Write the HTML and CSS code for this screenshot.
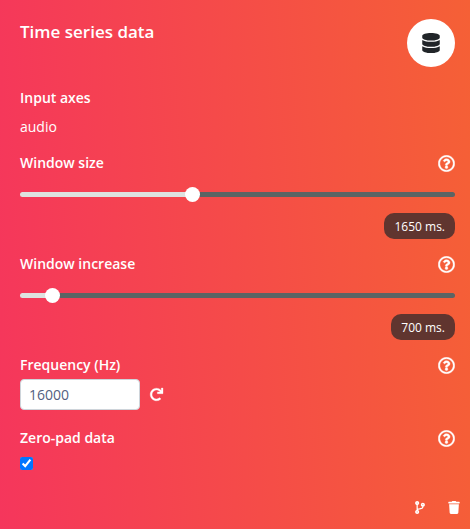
FILE: index.html
```html
<!DOCTYPE html>
<html lang="en">
<head>
<meta charset="utf-8">
<meta name="viewport" content="width=device-width, initial-scale=1">
<title>Time series data</title>
<link rel="stylesheet" href="styles.css">
</head>
<body>
<svg class="sprite" aria-hidden="true">
  <symbol id="help" viewBox="0 0 512 512"><path d="M256 8C119.043 8 8 119.083 8 256c0 136.997 111.043 248 248 248s248-111.003 248-248C504 119.083 392.957 8 256 8zm0 448c-110.532 0-200-89.431-200-200 0-110.495 89.472-200 200-200 110.491 0 200 89.471 200 200 0 110.53-89.431 200-200 200zm107.244-255.2c0 67.052-72.421 68.084-72.421 92.863V300c0 6.627-5.373 12-12 12h-45.647c-6.627 0-12-5.373-12-12v-8.659c0-35.745 27.1-50.034 47.579-61.516 17.561-9.845 28.324-16.541 28.324-29.579 0-17.246-21.999-28.693-39.784-28.693-23.189 0-33.894 10.977-48.942 29.969-4.057 5.12-11.46 6.071-16.666 2.124l-27.824-21.098c-5.107-3.872-6.251-11.066-2.644-16.363C184.846 131.491 214.94 112 261.794 112c49.071 0 101.45 38.304 101.45 88.8zM298 368c0 23.159-18.841 42-42 42s-42-18.841-42-42 18.841-42 42-42 42 18.841 42 42z"/></symbol>
</svg>
<main class="card">
  <header class="card-header">
    <h1 class="title">Time series data</h1>
    <span class="badge-icon">
      <svg class="icon-database" viewBox="0 0 448 512" aria-hidden="true"><path d="M448 73.143v45.714C448 159.143 347.667 192 224 192S0 159.143 0 118.857V73.143C0 32.857 100.333 0 224 0s224 32.857 224 73.143zM448 176v102.857C448 319.143 347.667 352 224 352S0 319.143 0 278.857V176c48.125 33.143 136.208 48.572 224 48.572S399.874 209.143 448 176zm0 160v102.857C448 479.143 347.667 512 224 512S0 479.143 0 438.857V336c48.125 33.143 136.208 48.572 224 48.572S399.874 369.143 448 336z"/></svg>
    </span>
  </header>

  <section class="axes">
    <h2 class="label">Input axes</h2>
    <p class="axis">audio</p>
  </section>

  <section class="slider-field">
    <div class="field-head">
      <label class="label" for="window-size">Window size</label>
      <button class="icon-button" type="button" aria-label="Help"><svg class="icon-help"><use href="#help"/></svg></button>
    </div>
    <input class="slider" id="window-size" type="range" min="0" max="1000" value="392" style="--fill: 39.2%">
    <output class="value" for="window-size">1650 ms.</output>
  </section>

  <section class="slider-field">
    <div class="field-head">
      <label class="label" for="window-increase">Window increase</label>
      <button class="icon-button" type="button" aria-label="Help"><svg class="icon-help"><use href="#help"/></svg></button>
    </div>
    <input class="slider" id="window-increase" type="range" min="0" max="1000" value="60" style="--fill: 6%">
    <output class="value" for="window-increase">700 ms.</output>
  </section>

  <section class="frequency">
    <div class="field-head">
      <label class="label" for="frequency">Frequency (Hz)</label>
      <button class="icon-button" type="button" aria-label="Help"><svg class="icon-help"><use href="#help"/></svg></button>
    </div>
    <div class="input-row">
      <input class="text-input" id="frequency" type="text" inputmode="numeric" value="16000">
      <button class="icon-button" type="button" aria-label="Reset frequency"><svg class="icon-redo" viewBox="0 0 512 512"><path d="M500.33 0h-47.41a12 12 0 0 0-12 12.57l4 82.76A247.42 247.42 0 0 0 256 8C119.34 8 7.9 119.53 8 256.19 8.1 393.07 119.1 504 256 504a247.1 247.1 0 0 0 166.18-63.91 12 12 0 0 0 .48-17.43l-34-34a12 12 0 0 0-16.38-.55A176 176 0 1 1 402.1 157.8l-101.53-4.87a12 12 0 0 0-12.57 12v47.41a12 12 0 0 0 12 12h200.33a12 12 0 0 0 12-12V12a12 12 0 0 0-12-12z"/></svg></button>
    </div>
  </section>

  <section class="zero-pad">
    <div class="field-head">
      <label class="label" for="zero-pad">Zero-pad data</label>
      <button class="icon-button" type="button" aria-label="Help"><svg class="icon-help"><use href="#help"/></svg></button>
    </div>
    <input class="checkbox" id="zero-pad" type="checkbox" checked>
  </section>

  <footer class="actions">
    <button class="icon-button" type="button" aria-label="Branch"><svg class="icon-branch" viewBox="0 0 384 512"><path d="M384 144c0-44.2-35.8-80-80-80s-80 35.8-80 80c0 36.4 24.3 67.1 57.5 76.8-.6 16.1-4.2 28.5-11 36.9-15.4 19.2-49.3 22.4-85.2 25.7-28.2 2.6-57.4 5.4-81.3 16.9v-144c32.5-10.2 56-40.5 56-76.3 0-44.2-35.8-80-80-80S0 35.8 0 80c0 35.8 23.5 66.1 56 76.3v199.3C23.5 365.9 0 396.2 0 432c0 44.2 35.8 80 80 80s80-35.8 80-80c0-34-21.2-63.1-51.2-74.6 3.1-5.2 7.8-9.8 14.9-13.4 16.2-8.2 40.4-10.4 66.1-12.8 42.2-3.9 90-8.4 118.2-43.4 14-17.4 21.1-39.8 21.6-67.9 31.6-10.8 54.4-40.7 54.4-75.9zM80 64c8.8 0 16 7.2 16 16s-7.2 16-16 16-16-7.2-16-16 7.2-16 16-16zm0 384c-8.8 0-16-7.2-16-16s7.2-16 16-16 16 7.2 16 16-7.2 16-16 16zm224-320c8.8 0 16 7.2 16 16s-7.2 16-16 16-16-7.2-16-16 7.2-16 16-16z"/></svg></button>
    <button class="icon-button" type="button" aria-label="Delete"><svg class="icon-trash" viewBox="0 0 448 512"><path d="M432 32H312l-9.4-18.7A24 24 0 0 0 281.1 0H166.8a23.72 23.72 0 0 0-21.4 13.3L136 32H16A16 16 0 0 0 0 48v32a16 16 0 0 0 16 16h416a16 16 0 0 0 16-16V48a16 16 0 0 0-16-16zM53.2 467a48 48 0 0 0 47.9 45h245.8a48 48 0 0 0 47.9-45L416 128H32z"/></svg></button>
  </footer>
</main>
</body>
</html>
```
FILE: styles.css
```css
* {
  box-sizing: border-box;
}

body {
  margin: 0;
  color: #fff;
  font-family: "Open Sans", sans-serif;
  font-size: 14px;
  line-height: 20px;
}

.sprite {
  display: none;
}

.card {
  display: flex;
  flex-direction: column;
  min-height: 100vh;
  padding: 19px 15px 15px 20px;
  background: linear-gradient(87deg, #f5365c, #f56036);
}

.card-header {
  display: flex;
  align-items: flex-start;
  justify-content: space-between;
  margin-bottom: 21px;
}

.title {
  margin: 0;
  font-size: 17px;
  font-weight: 600;
  line-height: 26px;
}

.badge-icon {
  display: flex;
  align-items: center;
  justify-content: center;
  width: 48px;
  height: 48px;
  border-radius: 50%;
  background: #fff;
}

.label {
  margin: 0;
  font-size: 14px;
  font-weight: 600;
  line-height: 20px;
}

.axis {
  margin: 9px 0 16px;
}

.field-head {
  display: flex;
  align-items: center;
  justify-content: space-between;
}

.icon-button {
  display: flex;
  padding: 0;
  border: 0;
  background: none;
  color: inherit;
  cursor: pointer;
}

svg {
  display: block;
  fill: currentColor;
}

.icon-help {
  width: 17px;
  height: 17px;
  stroke: currentColor;
  stroke-width: 12px;
}

.icon-database {
  width: 18px;
  height: 20px;
  color: #212529;
}

.icon-redo {
  width: 13px;
  height: 13px;
  overflow: visible;
  stroke: currentColor;
  stroke-width: 12px;
}

.icon-branch {
  width: 10px;
  height: 13px;
}

.icon-trash {
  width: 12px;
  height: 13px;
}

.slider-field {
  display: flex;
  flex-direction: column;
  margin-bottom: 15px;
}

.slider {
  --track: linear-gradient(90deg, #dee2e0 var(--fill), #5c6464 var(--fill));
  appearance: none;
  width: 100%;
  height: 15px;
  margin: 14px 0 11px;
  background: none;
}

.slider::-webkit-slider-runnable-track {
  height: 5px;
  border-radius: 3px;
  background: var(--track);
}

.slider::-webkit-slider-thumb {
  appearance: none;
  width: 15px;
  height: 15px;
  margin-top: -5px;
  border-radius: 50%;
  background: #fff;
}

.value {
  align-self: flex-end;
  padding: 4px 10px 2px;
  border-radius: 10px;
  background: #60352f;
  font-size: 12px;
  line-height: 20px;
}

.frequency {
  margin-bottom: 18px;
}

.input-row {
  display: flex;
  align-items: center;
  gap: 10px;
  margin-top: 4px;
}

.text-input {
  width: 120px;
  height: 31px;
  padding: 0 8px;
  border: 1px solid #ced4da;
  border-radius: 4px;
  background: #fff;
  color: #525f7f;
  font: inherit;
}

.checkbox {
  display: block;
  width: 13px;
  height: 13px;
  margin: 9px 0 0;
  accent-color: #0075ff;
}

.actions {
  display: flex;
  align-items: center;
  justify-content: flex-end;
  gap: 23px;
  margin-top: auto;
  margin-right: -5px;
}
```
